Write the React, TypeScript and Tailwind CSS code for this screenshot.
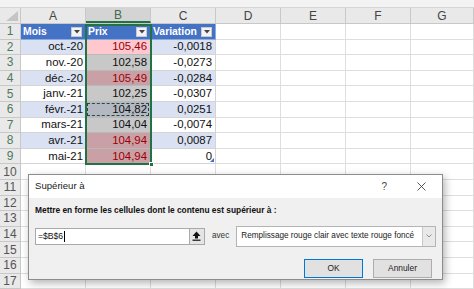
import React from "react";

const COLS = ["A", "B", "C", "D", "E", "F", "G"];
const COL_W = ["w-[65px]", "w-[65px]", "w-[65px]", "w-[65px]", "w-[65px]", "w-[65px]", "w-[63px]"];

type Row = {
  mois: string;
  prix: string;
  variation: string;
  prixBg: string;
  red: boolean;
  marquee?: boolean;
};

const rows: Row[] = [
  { mois: "oct.-20", prix: "105,46", variation: "-0,0018", prixBg: "bg-[#ffc7ce]", red: true },
  { mois: "nov.-20", prix: "102,58", variation: "-0,0273", prixBg: "bg-[#c8c8c8]", red: false },
  { mois: "déc.-20", prix: "105,49", variation: "-0,0284", prixBg: "bg-[#c9a0a5]", red: true },
  { mois: "janv.-21", prix: "102,25", variation: "-0,0307", prixBg: "bg-[#c8c8c8]", red: false },
  { mois: "févr.-21", prix: "104,82", variation: "0,0251", prixBg: "bg-[#b3b8c3]", red: false, marquee: true },
  { mois: "mars-21", prix: "104,04", variation: "-0,0074", prixBg: "bg-[#c8c8c8]", red: false },
  { mois: "avr.-21", prix: "104,94", variation: "0,0087", prixBg: "bg-[#c9a0a5]", red: true },
  { mois: "mai-21", prix: "104,94", variation: "0", prixBg: "bg-[#c9a0a5]", red: true },
];

const FilterButton = () => (
  <div className="absolute right-[3px] top-[3px] w-[11px] h-[10px] bg-[#f3f3f3] border border-[#c9c9c9] flex items-center justify-center">
    <svg width="6" height="4" viewBox="0 0 6 4">
      <path d="M0 0 L6 0 L3 3.5 Z" fill="#444" />
    </svg>
  </div>
);

const RowHeader = ({ n, selected }: { n: number; selected?: boolean }) => (
  <div
    className={`w-[21px] shrink-0 h-full flex items-center justify-center border-r border-b border-[#c8c8c8] bg-[#e9e9e9] text-[12px] ${
      selected ? "text-[#4d7a5e]" : "text-[#555]"
    }`}
  >
    {n}
  </div>
);

const EmptyCells = ({ from }: { from: number }) => (
  <>
    {COL_W.slice(from).map((w, i) => (
      <div key={i} className={`${w} shrink-0 h-full border-r border-b border-[#dedede]`} />
    ))}
  </>
);

const UpArrowIcon = () => (
  <svg width="9" height="10" viewBox="0 0 9 10">
    <path d="M4.5 0.5 L8.5 5 L6 5 L6 7.5 L3 7.5 L3 5 L0.5 5 Z" fill="#111" />
    <rect x="0.5" y="8.6" width="8" height="1.2" fill="#111" />
  </svg>
);

const SuperieurDialog = () => (
  <div className="absolute left-[28px] top-[174px] w-[415px] h-[106px] border border-[#8c8c8c] bg-[#f0f0f0] shadow-[2px_3px_8px_rgba(0,0,0,0.3)] font-['Liberation_Sans',sans-serif] text-[#111]">
    <div className="h-[23px] bg-white flex items-center pl-[6px] pr-[14px]">
      <span className="text-[9.6px] text-[#222]">Supérieur à</span>
      <span className="ml-auto text-[10px] text-[#444] mr-[30px]">?</span>
      <svg width="9" height="9" viewBox="0 0 9 9" className="mr-[2px]">
        <path d="M0.5 0.5 L8.5 8.5 M8.5 0.5 L0.5 8.5" stroke="#444" strokeWidth="0.9" />
      </svg>
    </div>
    <div className="px-[6px] pt-[7px]">
      <div className="text-[8.4px] font-bold leading-[10px]">
        Mettre en forme les cellules dont le contenu est supérieur à :
      </div>
      <div className="flex items-center mt-[10px] h-[22px]">
        <div className="w-[171px] h-[17px] bg-white border border-[#a9a9a9] flex items-center">
          <span className="pl-[2px] text-[8.6px]">=$B$6</span>
          <span className="w-px h-[11px] bg-black ml-[1px]" />
          <div className="ml-auto w-[15px] h-full bg-[#e5e5e5] border-l border-[#a9a9a9] flex items-center justify-center">
            <UpArrowIcon />
          </div>
        </div>
        <span className="ml-[7px] text-[8.2px] text-[#333]">avec</span>
        <div className="ml-[7px] w-[201px] h-[21px] bg-white border border-[#b4b4b4] flex items-center">
          <span className="pl-[4px] text-[8.2px] text-[#222] whitespace-nowrap">
            Remplissage rouge clair avec texte rouge foncé
          </span>
          <div className="ml-auto w-[13px] h-full bg-[#e9e9e9] border-l border-[#c9c9c9] flex items-center justify-center">
            <svg width="6" height="4" viewBox="0 0 6 4">
              <path d="M0.5 0.5 L3 3 L5.5 0.5" stroke="#888" strokeWidth="0.9" fill="none" />
            </svg>
          </div>
        </div>
      </div>
      <div className="flex justify-end gap-[10px] mt-[12px] pr-[4px]">
        <div className="w-[59px] h-[19px] bg-[#e1e1e1] border border-[#0078d7] flex items-center justify-center text-[8.4px] text-[#222]">
          OK
        </div>
        <div className="w-[59px] h-[19px] bg-[#e1e1e1] border border-[#adadad] flex items-center justify-center text-[8.4px] text-[#222]">
          Annuler
        </div>
      </div>
    </div>
  </div>
);

const App = () => {
  return (
    <div className="relative w-[474px] h-[289px] overflow-hidden bg-white font-['Liberation_Sans',sans-serif] text-[#111]">
      <div className="h-[8px] bg-[#f3f3f3] border-b border-[#d6d6d6]" />

      {/* column headers */}
      <div className="flex h-[16px] bg-[#e9e9e9] border-b border-[#c8c8c8]">
        <div className="w-[21px] shrink-0 h-full border-r border-[#c8c8c8] relative">
          <svg width="12" height="10" viewBox="0 0 12 10" className="absolute right-[2px] bottom-[2px]">
            <path d="M12 0 L12 10 L0 10 Z" fill="#c4c4c4" />
          </svg>
        </div>
        {COLS.map((c, i) => (
          <div
            key={c}
            className={`${COL_W[i]} shrink-0 h-full flex items-center justify-center text-[12px] border-r border-[#c8c8c8] ${
              c === "B" ? "bg-[#d4d4d4] text-[#3e6b50] border-b-2 border-b-[#217346]" : "text-[#444]"
            }`}
          >
            {c}
          </div>
        ))}
      </div>

      {/* row 1: table header */}
      <div className="flex h-[15.6px]">
        <RowHeader n={1} selected />
        {["Mois", "Prix", "Variation"].map((h) => (
          <div
            key={h}
            className="w-[65px] shrink-0 h-full relative bg-[#4472c4] border-r border-b border-[#8ea9db] text-white font-bold text-[10.4px] flex items-center pl-[2px]"
          >
            {h}
            <FilterButton />
          </div>
        ))}
        <EmptyCells from={3} />
      </div>

      {rows.map((r, i) => {
        const band = i % 2 === 0 ? "bg-[#d9e1f2]" : "bg-white";
        return (
          <div key={r.mois} className="flex h-[15.6px] text-[11.4px]">
            <RowHeader n={i + 2} selected />
            <div className={`w-[65px] shrink-0 h-full ${band} border-r border-b border-[#d4d4d4] flex items-center justify-end pr-[2px]`}>
              {r.mois}
            </div>
            <div
              className={`w-[65px] shrink-0 h-full relative ${r.prixBg} border-r border-b border-[#b9b9b9] flex items-center justify-end pr-[3px] ${
                r.red ? "text-[#9c0006]" : "text-[#111]"
              }`}
            >
              {r.prix}
              {r.marquee && <div className="absolute inset-[1px] border border-dashed border-[#2b4a3a]" />}
            </div>
            <div className={`w-[65px] shrink-0 h-full relative ${band} border-r border-b border-[#d4d4d4] flex items-center justify-end pr-[3px]`}>
              {r.variation}
              {i === rows.length - 1 && (
                <svg width="4" height="4" viewBox="0 0 4 4" className="absolute right-[1px] bottom-[1px]">
                  <path d="M4 0 L4 4 L0 4 Z" fill="#4472c4" />
                </svg>
              )}
            </div>
            <EmptyCells from={3} />
          </div>
        );
      })}

      {[10, 11, 12, 13, 14, 15, 16, 17].map((n) => (
        <div key={n} className="flex h-[15.6px]">
          <RowHeader n={n} />
          <EmptyCells from={0} />
        </div>
      ))}

      {/* selection outline B1:B9 */}
      <div className="absolute left-[85px] top-[24px] w-[67px] h-[141px] border-2 border-[#217346] pointer-events-none" />
      <div className="absolute left-[149px] top-[162px] w-[5px] h-[5px] bg-[#217346] border border-white" />

      <SuperieurDialog />
    </div>
  );
};

export default App;
